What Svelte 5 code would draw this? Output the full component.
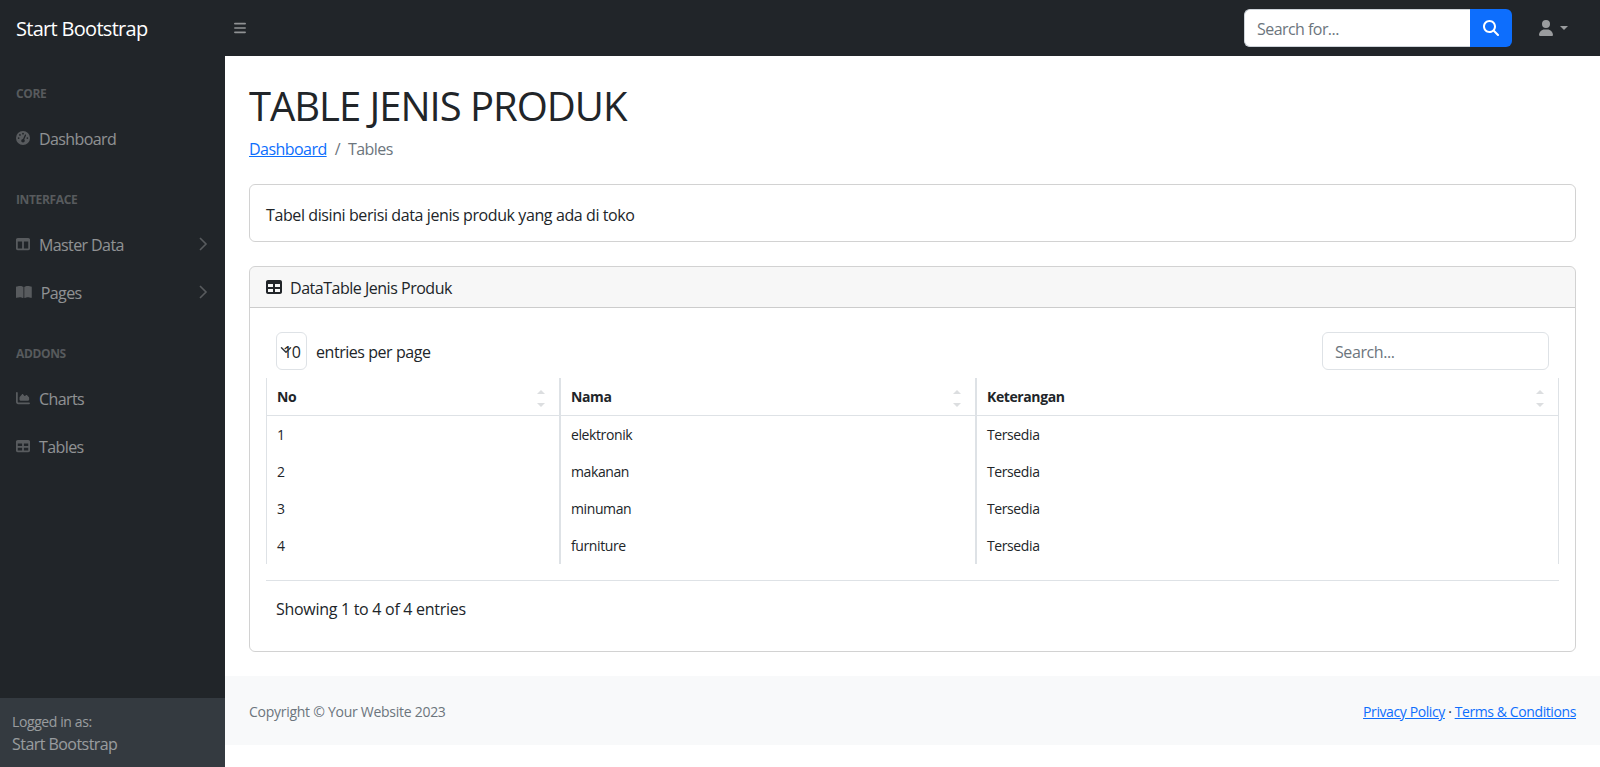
<script lang="ts">
	const icons = {
		gauge: { w: 512, d: 'M0 256a256 256 0 1 1 512 0A256 256 0 1 1 0 256zM288 96a32 32 0 1 0 -64 0 32 32 0 1 0 64 0zM256 416c35.3 0 64-28.7 64-64c0-17.4-6.9-33.1-18.1-44.6L366 161.7c5.3-12.1-.2-26.3-12.3-31.6s-26.3 .2-31.6 12.3L257.9 288c-.6 0-1.3 0-1.9 0c-35.3 0-64 28.7-64 64s28.7 64 64 64zM176 144a32 32 0 1 0 -64 0 32 32 0 1 0 64 0zM96 288a32 32 0 1 0 0-64 32 32 0 1 0 0 64zm352-32a32 32 0 1 0 -64 0 32 32 0 1 0 64 0z' },
		columns: { w: 512, d: 'M0 96C0 60.7 28.7 32 64 32H448c35.3 0 64 28.7 64 64V416c0 35.3-28.7 64-64 64H64c-35.3 0-64-28.7-64-64V96zm64 64V416H224V160H64zm384 0H288V416H448V160z' },
		book: { w: 576, d: 'M249.6 471.5c10.8 3.8 22.4-4.1 22.4-15.5V78.6c0-4.2-1.6-8.4-5-11C247.4 52 202.4 32 144 32C93.5 32 46.3 45.3 18.1 56.1C6.8 60.5 0 71.7 0 83.8V454.1c0 11.9 12.8 20.2 24.1 16.5C55.6 460.1 105.5 448 144 448c33.9 0 79 14 105.6 23.5zm76.8 0C353 462 398.1 448 432 448c38.5 0 88.4 12.1 119.9 22.6c11.3 3.8 24.1-4.6 24.1-16.5V83.8c0-12.1-6.8-23.3-18.1-27.6C529.7 45.3 482.5 32 432 32c-58.4 0-103.4 20-123 35.6c-3.3 2.6-5 6.8-5 11V456c0 11.4 11.7 19.3 22.4 15.5z' },
		chart: { w: 512, d: 'M64 64c0-17.7-14.3-32-32-32S0 46.3 0 64V400c0 44.2 35.8 80 80 80H480c17.7 0 32-14.3 32-32s-14.3-32-32-32H80c-8.8 0-16-7.2-16-16V64zm96 288H448c17.7 0 32-14.3 32-32V251.8c0-7.6-2.7-15-7.7-20.8l-65.8-76.8c-12.1-14.2-33.7-15-46.9-1.8l-21 21c-10 10-26.4 9.2-35.4-1.6l-39.2-47c-12.6-15.1-35.7-15.4-48.7-.6L135.9 215c-5.1 5.8-7.9 13.3-7.9 21v84c0 17.7 14.3 32 32 32z' },
		table: { w: 512, d: 'M64 256V160H224v96H64zm0 64H224v96H64V320zm224 96V320H448v96H288zM448 256H288V160H448v96zM64 32C28.7 32 0 60.7 0 96V416c0 35.3 28.7 64 64 64H448c35.3 0 64-28.7 64-64V96c0-35.3-28.7-64-64-64H64z' },
		bars: { w: 448, d: 'M0 96C0 78.3 14.3 64 32 64H416c17.7 0 32 14.3 32 32s-14.3 32-32 32H32C14.3 128 0 113.7 0 96zM0 256c0-17.7 14.3-32 32-32H416c17.7 0 32 14.3 32 32s-14.3 32-32 32H32c-17.7 0-32-14.3-32-32zM448 416c0 17.7-14.3 32-32 32H32c-17.7 0-32-14.3-32-32s14.3-32 32-32H416c17.7 0 32 14.3 32 32z' },
		search: { w: 512, d: 'M416 208c0 45.9-14.9 88.3-40 122.7L502.6 457.4c12.5 12.5 12.5 32.8 0 45.3s-32.8 12.5-45.3 0L330.7 376c-34.4 25.2-76.8 40-122.7 40C93.1 416 0 322.9 0 208S93.1 0 208 0S416 93.1 416 208zM208 352a144 144 0 1 0 0-288 144 144 0 1 0 0 288z' },
		user: { w: 448, d: 'M224 256A128 128 0 1 0 224 0a128 128 0 1 0 0 256zm-45.7 48C79.8 304 0 383.8 0 482.3C0 498.7 13.3 512 29.7 512H418.3c16.4 0 29.7-13.3 29.7-29.7C448 383.8 368.2 304 269.7 304H178.3z' }
	};

	const menu = [
		{ heading: 'Core', links: [{ label: 'Dashboard', icon: icons.gauge }] },
		{
			heading: 'Interface',
			links: [
				{ label: 'Master Data', icon: icons.columns, more: true },
				{ label: 'Pages', icon: icons.book, more: true }
			]
		},
		{
			heading: 'Addons',
			links: [
				{ label: 'Charts', icon: icons.chart },
				{ label: 'Tables', icon: icons.table }
			]
		}
	];

	const rows = [
		{ no: 1, nama: 'elektronik', ket: 'Tersedia' },
		{ no: 2, nama: 'makanan', ket: 'Tersedia' },
		{ no: 3, nama: 'minuman', ket: 'Tersedia' },
		{ no: 4, nama: 'furniture', ket: 'Tersedia' }
	];
	const columns = ['No', 'Nama', 'Keterangan'];
</script>

{#snippet icon(glyph, cls)}
	<svg class={cls} viewBox="0 0 {glyph.w} 512" fill="currentColor" aria-hidden="true"><path d={glyph.d} /></svg>
{/snippet}

<div class="page">
	<header class="topnav">
		<a class="brand" href="#top">Start Bootstrap</a>
		<button class="toggle" aria-label="Toggle sidebar">{@render icon(icons.bars, 'i-bars')}</button>
		<form class="nav-search">
			<input type="text" placeholder="Search for..." />
			<button type="button" aria-label="Search">{@render icon(icons.search, 'i-search')}</button>
		</form>
		<div class="user">
			{@render icon(icons.user, 'i-user')}
			<span class="caret"></span>
		</div>
	</header>

	<div class="layout">
		<aside class="sidenav">
			<nav class="menu">
				{#each menu as group}
					<div class="heading">{group.heading}</div>
					{#each group.links as link}
						<a class="nav-link" href="#top">
							<span class="nav-icon">{@render icon(link.icon, 'i-nav')}</span>
							{link.label}
							{#if link.more}
								<svg class="angle" viewBox="0 0 16 16" fill="none" stroke="currentColor" stroke-width="1.6"><path d="M5 2l6 6-6 6" /></svg>
							{/if}
						</a>
					{/each}
				{/each}
			</nav>
			<div class="side-footer">
				<div class="small">Logged in as:</div>
				<div class="who">Start Bootstrap</div>
			</div>
		</aside>

		<div class="content">
			<main>
				<h1>TABLE JENIS PRODUK</h1>
				<ol class="breadcrumb">
					<li><a href="#top">Dashboard</a></li>
					<li class="sep">/</li>
					<li class="active">Tables</li>
				</ol>
				<div class="card info">Tabel disini berisi data jenis produk yang ada di toko</div>
				<div class="card">
					<div class="card-header">{@render icon(icons.table, 'i-head')} DataTable Jenis Produk</div>
					<div class="card-body">
						<div class="dt-top">
							<label class="dt-length">
								<span class="select">
									<svg class="sel-arrow" viewBox="0 0 16 16" fill="none" stroke="#343a40" stroke-width="2" stroke-linecap="round" stroke-linejoin="round"><path d="M2 5l6 6 6-6" /></svg>
									10
								</span>
								entries per page
							</label>
							<input class="dt-search" type="text" placeholder="Search..." />
						</div>
						<table>
							<colgroup>
								<col style="width: 294px" />
								<col style="width: 416px" />
								<col />
							</colgroup>
							<thead>
								<tr>
									{#each columns as col}
										<th>
											{col}
											<span class="sorter"><i class="up"></i><i class="down"></i></span>
										</th>
									{/each}
								</tr>
							</thead>
							<tbody>
								{#each rows as row}
									<tr>
										<td>{row.no}</td>
										<td>{row.nama}</td>
										<td>{row.ket}</td>
									</tr>
								{/each}
							</tbody>
						</table>
						<div class="dt-bottom">Showing 1 to 4 of 4 entries</div>
					</div>
				</div>
			</main>
			<footer>
				<div class="copy">Copyright © Your Website 2023</div>
				<div class="legal"><a href="#top">Privacy Policy</a> · <a href="#top">Terms &amp; Conditions</a></div>
			</footer>
		</div>
	</div>
</div>

<style>
	:global(body) {
		margin: 0;
		background: #fff;
		color: #212529;
		font-family: 'Open Sans', 'Noto Sans', sans-serif;
		font-size: 16px;
		line-height: 1.5;
		letter-spacing: -0.4px;
	}

	.page {
		height: 767px;
		overflow: hidden;
	}

	.topnav {
		display: flex;
		align-items: center;
		height: 56px;
		background: #212529;
	}

	.brand {
		width: 225px;
		box-sizing: border-box;
		padding: 1px 0 0 16px;
		color: #fff;
		font-size: 20px;
		letter-spacing: -0.7px;
		text-decoration: none;
	}

	.toggle {
		display: flex;
		margin-left: 9px;
		padding: 0;
		border: 0;
		background: none;
		color: rgba(255, 255, 255, 0.5);
	}

	.i-bars {
		width: 12px;
		height: 14px;
	}

	.nav-search {
		display: flex;
		margin-left: auto;
		height: 38px;
	}

	.nav-search input {
		box-sizing: border-box;
		width: 226px;
		height: 38px;
		padding: 7px 12px 5px;
		border: 1px solid #ced4da;
		border-right: 0;
		border-radius: 6px 0 0 6px;
		background: #fff;
		font: inherit;
		letter-spacing: -0.55px;
		outline: none;
	}

	input::placeholder {
		color: #6c757d;
		opacity: 1;
	}

	.nav-search button {
		display: flex;
		align-items: center;
		justify-content: center;
		width: 42px;
		padding: 0;
		border: 0;
		border-radius: 0 6px 6px 0;
		background: #0d6efd;
		color: #fff;
	}

	.i-search {
		width: 16px;
		height: 16px;
	}

	.user {
		display: flex;
		align-items: center;
		gap: 7px;
		width: 32px;
		margin: 0 29px 0 27px;
		color: rgba(255, 255, 255, 0.55);
	}

	.i-user {
		width: 14px;
		height: 16px;
		flex: none;
	}

	.caret {
		border-top: 4.8px solid currentColor;
		border-left: 4.8px solid transparent;
		border-right: 4.8px solid transparent;
	}

	.layout {
		display: flex;
		height: 711px;
	}

	.sidenav {
		display: flex;
		flex-direction: column;
		flex: none;
		width: 225px;
		background: #212529;
		color: rgba(255, 255, 255, 0.5);
	}

	.menu {
		flex: 1;
	}

	.heading {
		padding: 29px 16px 11px;
		color: rgba(255, 255, 255, 0.25);
		font-size: 12px;
		line-height: 18px;
		font-weight: 700;
		letter-spacing: -0.36px;
		text-transform: uppercase;
	}

	.nav-link {
		display: flex;
		align-items: center;
		padding: 13px 16px 11px;
		color: rgba(255, 255, 255, 0.5);
		letter-spacing: -0.6px;
		text-decoration: none;
	}

	.nav-icon {
		display: flex;
		margin: -2px 9px 0 0;
		color: rgba(255, 255, 255, 0.25);
	}

	.i-nav {
		height: 14px;
		width: auto;
	}

	.angle {
		width: 16px;
		height: 16px;
		margin: -3px -2px 0 auto;
		color: rgba(255, 255, 255, 0.25);
	}

	.side-footer {
		padding: 13px 12px 11px;
		background: #343a40;
	}

	.small {
		font-size: 14px;
	}

	.who {
		letter-spacing: -0.55px;
	}

	.content {
		flex: 1;
		min-width: 0;
	}

	main {
		padding: 0 24px;
	}

	h1 {
		margin: 26px 0 7px;
		font-size: 40px;
		line-height: 48px;
		font-weight: 400;
		letter-spacing: -1.02px;
	}

	.breadcrumb {
		display: flex;
		gap: 8px;
		margin: 0 0 23px;
		padding: 0;
		list-style: none;
		letter-spacing: -0.55px;
	}

	a {
		color: #0d6efd;
	}

	.sep,
	.active {
		color: #6c757d;
	}

	.card {
		border: 1px solid rgba(0, 0, 0, 0.175);
		border-radius: 6px;
		margin-bottom: 24px;
	}

	.info {
		padding: 18px 16px 14px;
	}

	.card-header {
		display: flex;
		align-items: center;
		gap: 8px;
		padding: 9px 16px 7px;
		background: rgba(0, 0, 0, 0.03);
		border-bottom: 1px solid rgba(0, 0, 0, 0.175);
		border-radius: 5px 5px 0 0;
		letter-spacing: -0.48px;
	}

	.i-head {
		width: 16px;
		height: 16px;
		margin-top: -2px;
	}

	.card-body {
		padding: 16px;
	}

	.dt-top {
		display: flex;
		justify-content: space-between;
		align-items: center;
		padding: 8px 10px;
		height: 38px;
	}

	.dt-length {
		display: flex;
		align-items: center;
		gap: 9px;
		padding-top: 1px;
		letter-spacing: -0.45px;
	}

	.select {
		position: relative;
		box-sizing: border-box;
		width: 31px;
		height: 38px;
		margin-top: -1px;
		padding: 7px 0 0 6px;
		border: 1px solid #dee2e6;
		border-radius: 6px;
	}

	.sel-arrow {
		position: absolute;
		left: 3px;
		top: 11px;
		width: 12px;
		height: 12px;
	}

	.dt-search {
		box-sizing: border-box;
		width: 227px;
		height: 38px;
		padding: 7px 12px 5px;
		border: 1px solid #dee2e6;
		border-radius: 6px;
		font: inherit;
		letter-spacing: -0.4px;
		outline: none;
	}

	table {
		width: 100%;
		border-collapse: separate;
		border-spacing: 0;
		table-layout: fixed;
		font-size: 14px;
		color: #212529;
	}

	th,
	td {
		height: 37px;
		box-sizing: border-box;
		padding: 0 10px;
		text-align: left;
		border-left: 1px solid #dee2e6;
		border-right: 1px solid #dee2e6;
	}

	th {
		position: relative;
		height: 38px;
		font-weight: 700;
		border-bottom: 1px solid #dee2e6;
	}

	.sorter {
		position: absolute;
		right: 14px;
		top: 12px;
		display: flex;
		flex-direction: column;
		gap: 9px;
	}

	.sorter i {
		display: block;
		border-left: 4px solid transparent;
		border-right: 4px solid transparent;
	}

	.up {
		border-bottom: 4px solid #dcdee0;
	}

	.down {
		border-top: 4px solid #dcdee0;
	}

	.dt-bottom {
		margin-top: 16px;
		padding: 16px 10px 14px;
		border-top: 1px solid #dee2e6;
		letter-spacing: -0.29px;
	}

	footer {
		display: flex;
		justify-content: space-between;
		align-items: center;
		padding: 25px 24px 23px;
		background: #f8f9fa;
		font-size: 14px;
		color: #6c757d;
	}

	.copy {
		letter-spacing: -0.27px;
	}

	.legal {
		color: #212529;
	}
</style>
